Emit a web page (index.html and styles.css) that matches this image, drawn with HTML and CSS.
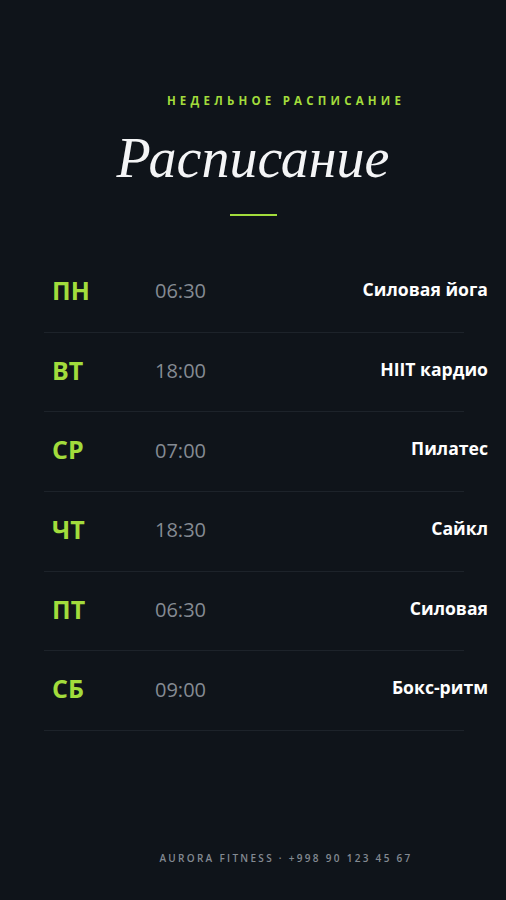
FILE: index.html
```html
<!DOCTYPE html>
<html lang="ru">
<head>
    <meta charset="utf-8">
    <title>Расписание</title>
    <link rel="stylesheet" href="styles.css">
</head>
<body>
    <div class="page">
        <div class="header">
            <div class="eyebrow">Недельное расписание</div>
            <h1 class="title">Расписание</h1>
            <div class="rule"></div>
        </div>

        <div class="schedule">
            <div class="row">
                <span class="day">ПН</span>
                <span class="time">06:30</span>
                <span class="name">Силовая йога</span>
            </div>
            <div class="row">
                <span class="day">ВТ</span>
                <span class="time">18:00</span>
                <span class="name">HIIT кардио</span>
            </div>
            <div class="row">
                <span class="day">СР</span>
                <span class="time">07:00</span>
                <span class="name">Пилатес</span>
            </div>
            <div class="row">
                <span class="day">ЧТ</span>
                <span class="time">18:30</span>
                <span class="name">Сайкл</span>
            </div>
            <div class="row">
                <span class="day">ПТ</span>
                <span class="time">06:30</span>
                <span class="name">Силовая</span>
            </div>
            <div class="row">
                <span class="day">СБ</span>
                <span class="time">09:00</span>
                <span class="name">Бокс-ритм</span>
            </div>
        </div>

        <div class="footer">Aurora Fitness · +998 90 123 45 67</div>
    </div>
</body>
</html>
```

FILE: styles.css
```css
body {
    margin: 0;
    padding: 0;
    background-color: #0f141a;
    font-family: "Open Sans", "Noto Sans", sans-serif;
    color: #fff;
}

.page {
    min-height: 900px;
    display: flex;
    flex-direction: column;
}

.header {
    padding-top: 93px;
    display: flex;
    flex-direction: column;
    align-items: center;
}

.eyebrow {
    font-size: 11.5px;
    line-height: 16px;
    font-weight: 700;
    letter-spacing: 4.2px;
    text-transform: uppercase;
    color: #a2dc3c;
    padding-left: 66px;
}

.title {
    margin: 18px 0 0 0;
    font-family: "Liberation Serif", serif;
    font-style: italic;
    font-weight: 400;
    font-size: 56px;
    line-height: 62px;
    color: #f4f5f6;
}

.rule {
    margin-top: 25px;
    width: 47px;
    height: 2px;
    background-color: #a2dc3c;
}

.schedule {
    margin: 37px 42px 0 44px;
}

.row {
    height: 79.7px;
    box-sizing: border-box;
    border-bottom: 1px solid #1d232a;
    display: grid;
    grid-template-columns: 103px 1fr auto;
    align-items: center;
    padding-left: 8px;
}

.day {
    font-size: 25px;
    font-weight: 700;
    color: #a2dc3c;
    margin-top: -5px;
}

.time {
    font-size: 20px;
    color: #858b93;
    margin-top: -3px;
}

.name {
    font-size: 17.6px;
    font-weight: 700;
    color: #fff;
    margin-right: -24px;
    margin-top: -7px;
}

.footer {
    margin-top: auto;
    padding-bottom: 34px;
    padding-left: 66px;
    text-align: center;
    font-size: 10px;
    line-height: 16px;
    font-weight: 600;
    letter-spacing: 2.3px;
    text-transform: uppercase;
    color: #838a92;
}
```
